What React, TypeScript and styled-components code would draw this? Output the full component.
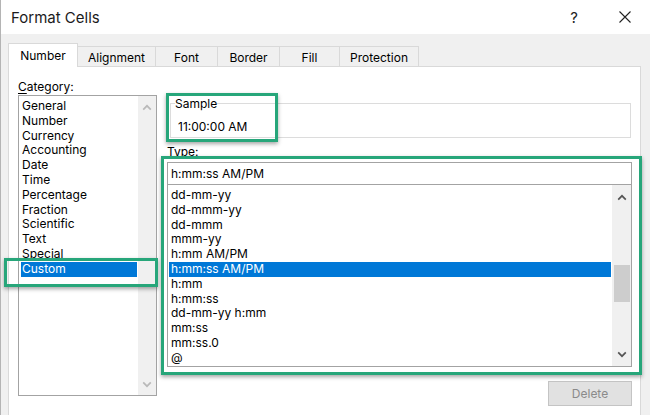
import React from 'react';
import styled, { createGlobalStyle } from 'styled-components';

const GlobalStyle = createGlobalStyle`
  html, body {
    margin: 0;
    padding: 0;
    background: #f0f0f0;
  }
  * {
    box-sizing: border-box;
  }
`;

const Window = styled.div`
  position: relative;
  width: 650px;
  height: 415px;
  overflow: hidden;
  display: flex;
  flex-direction: column;
  background: #f0f0f0;
  border-left: 1px solid #b4b4b4;
  font-family: Inter, "Open Sans", sans-serif;
  font-size: 12px;
  color: #000;
`;

const TitleBar = styled.div`
  flex: none;
  height: 34px;
  display: flex;
  align-items: center;
  background: #fff;
  padding: 0 2px 0 10px;
`;

const Title = styled.div`
  flex: 1;
  font-size: 15px;
  color: #1b1b1b;
`;

const TitleButton = styled.button`
  width: 46px;
  height: 30px;
  border: none;
  background: transparent;
  padding: 0;
  display: flex;
  align-items: center;
  justify-content: center;
  font-family: inherit;
  font-size: 15px;
  color: #222;

  & + & {
    margin-left: 5px;
  }
`;

const TabStrip = styled.div`
  flex: none;
  height: 32px;
  display: flex;
  align-items: flex-end;
  padding-left: 7px;
`;

const Tab = styled.div<{ $active?: boolean; $width: number }>`
  width: ${p => p.$width}px;
  height: ${p => (p.$active ? 24 : 20)}px;
  margin-right: -1px;
  margin-bottom: ${p => (p.$active ? -1 : 0)}px;
  display: flex;
  align-items: center;
  justify-content: center;
  border: 1px solid #d9d9d9;
  border-bottom: none;
  background: ${p => (p.$active ? '#fff' : '#f0f0f0')};
  position: relative;
  z-index: ${p => (p.$active ? 2 : 1)};
  padding-top: ${p => (p.$active ? 0 : 1)}px;
`;

const TabPanel = styled.div`
  flex: 1;
  width: 633px;
  margin-left: 7px;
  display: flex;
  align-items: flex-start;
  border: 1px solid #d9d9d9;
  border-bottom: none;
  background: #fff;
  padding: 12px 0 0 9px;
`;

const CategoryColumn = styled.div`
  width: 139px;
  display: flex;
  flex-direction: column;
`;

const FormatColumn = styled.div`
  width: 465px;
  margin-left: 10px;
  display: flex;
  flex-direction: column;
`;

const FieldLabel = styled.div<{ $gapTop?: number; $gapBottom?: number }>`
  line-height: 15px;
  margin-top: ${p => p.$gapTop ?? 0}px;
  margin-bottom: ${p => p.$gapBottom ?? 0}px;

  u {
    text-decoration-thickness: 1px;
    text-underline-offset: 2px;
  }
`;

const ListBox = styled.div<{ $height: number }>`
  height: ${p => p.$height}px;
  display: flex;
  border: 1px solid #a3a3a3;
  background: #fff;
`;

const ListItems = styled.div<{ $padLeft: number; $padTop: number }>`
  flex: 1;
  display: flex;
  flex-direction: column;
  padding: ${p => p.$padTop}px 1px 0 ${p => p.$padLeft}px;
  overflow: hidden;
`;

const ListItem = styled.div<{ $selected?: boolean; $indent: number }>`
  line-height: 14.8px;
  height: 14.8px;
  white-space: nowrap;
  padding-left: ${p => p.$indent}px;
  background: ${p => (p.$selected ? '#0078d7' : 'transparent')};
  color: ${p => (p.$selected ? '#fff' : '#000')};
`;

const ScrollBar = styled.div<{ $width: number }>`
  width: ${p => p.$width}px;
  display: flex;
  flex-direction: column;
  background: #f0f0f0;
`;

const ScrollArrow = styled.div<{ $height: number }>`
  height: ${p => p.$height}px;
  flex: none;
  display: flex;
  align-items: center;
  justify-content: center;
`;

const ScrollTrack = styled.div`
  flex: 1;
  display: flex;
  flex-direction: column;
  align-items: center;
`;

const ScrollThumb = styled.div<{ $offset: number; $size: number }>`
  width: 16px;
  margin-top: ${p => p.$offset}px;
  height: ${p => p.$size}px;
  background: #cdcdcd;
`;

const SampleGroup = styled.fieldset`
  margin: 17px 1px 0 3px;
  padding: 8px 0 3px 4px;
  border: 1px solid #dcdcdc;
  min-width: 0;

  legend {
    padding: 0;
    line-height: 15px;
    font-size: 12px;
  }
`;

const SampleValue = styled.div`
  line-height: 15px;
  padding-left: 3px;
`;

const TypeInput = styled.input`
  height: 22px;
  width: 100%;
  border: 1px solid #a3a3a3;
  border-bottom: none;
  padding: 0 0 0 3px;
  font-family: inherit;
  font-size: 12px;
  color: #000;
  background: #fff;
  outline: none;
`;

const ButtonRow = styled.div`
  display: flex;
  justify-content: flex-end;
  margin-top: 14px;
`;

const DeleteButton = styled.button`
  width: 84px;
  height: 25px;
  border: 1px solid #c4c4c4;
  background: #e1e1e1;
  color: #8a8a8a;
  font-family: inherit;
  font-size: 12px;
  padding: 0;
`;

const Callout = styled.div<{ $x: number; $y: number; $w: number; $h: number }>`
  position: absolute;
  left: ${p => p.$x}px;
  top: ${p => p.$y}px;
  width: ${p => p.$w}px;
  height: ${p => p.$h}px;
  border: 3px solid #27a67a;
  box-shadow: 0 2px 4px rgba(0, 0, 0, 0.35);
  pointer-events: none;
  z-index: 5;
`;

const Chevron = ({ dir, color }: { dir: 'up' | 'down'; color: string }) => (
  <svg width="10" height="7" viewBox="0 0 10 7">
    <path
      d={dir === 'up' ? 'M1.2 5.6 L5 1.8 L8.8 5.6' : 'M1.2 1.4 L5 5.2 L8.8 1.4'}
      fill="none"
      stroke={color}
      strokeWidth="1.7"
    />
  </svg>
);

const tabs = [
  { label: 'Number', width: 70 },
  { label: 'Alignment', width: 79 },
  { label: 'Font', width: 63 },
  { label: 'Border', width: 63 },
  { label: 'Fill', width: 61 },
  { label: 'Protection', width: 80 },
];

const categories = [
  'General', 'Number', 'Currency', 'Accounting', 'Date', 'Time',
  'Percentage', 'Fraction', 'Scientific', 'Text', 'Special', 'Custom',
];

const formats = [
  'dd-mm-yy', 'dd-mmm-yy', 'dd-mmm', 'mmm-yy', 'h:mm AM/PM', 'h:mm:ss AM/PM',
  'h:mm', 'h:mm:ss', 'dd-mm-yy h:mm', 'mm:ss', 'mm:ss.0', '@',
];

export default function App() {
  return (
    <>
      <GlobalStyle />
      <Window>
        <TitleBar>
          <Title>Format Cells</Title>
          <TitleButton>?</TitleButton>
          <TitleButton>
            <svg width="12" height="12" viewBox="0 0 12 12">
              <path d="M0.5 0.5 L11.5 11.5 M11.5 0.5 L0.5 11.5" stroke="#222" strokeWidth="1.1" />
            </svg>
          </TitleButton>
        </TitleBar>

        <TabStrip>
          {tabs.map(t => (
            <Tab key={t.label} $width={t.width} $active={t.label === 'Number'}>
              {t.label}
            </Tab>
          ))}
        </TabStrip>

        <TabPanel>
          <CategoryColumn>
            <FieldLabel $gapBottom={1}>
              <u>C</u>ategory:
            </FieldLabel>
            <ListBox $height={301}>
              <ListItems $padLeft={2} $padTop={3}>
                {categories.map(c => (
                  <ListItem key={c} $indent={1} $selected={c === 'Custom'}>
                    {c}
                  </ListItem>
                ))}
              </ListItems>
              <ScrollBar $width={18}>
                <ScrollArrow $height={22}>
                  <Chevron dir="up" color="#b9b9b9" />
                </ScrollArrow>
                <ScrollTrack />
                <ScrollArrow $height={22}>
                  <Chevron dir="down" color="#b9b9b9" />
                </ScrollArrow>
              </ScrollBar>
            </ListBox>
          </CategoryColumn>

          <FormatColumn>
            <SampleGroup>
              <legend>Sample</legend>
              <SampleValue>11:00:00 AM</SampleValue>
            </SampleGroup>
            <FieldLabel $gapTop={6} $gapBottom={3}>
              <u>T</u>ype:
            </FieldLabel>
            <TypeInput readOnly value="h:mm:ss AM/PM" />
            <ListBox $height={183}>
              <ListItems $padLeft={1} $padTop={3}>
                {formats.map(f => (
                  <ListItem key={f} $indent={2} $selected={f === 'h:mm:ss AM/PM'}>
                    {f}
                  </ListItem>
                ))}
              </ListItems>
              <ScrollBar $width={19}>
                <ScrollArrow $height={24}>
                  <Chevron dir="up" color="#555" />
                </ScrollArrow>
                <ScrollTrack>
                  <ScrollThumb $offset={56} $size={37} />
                </ScrollTrack>
                <ScrollArrow $height={24}>
                  <Chevron dir="down" color="#555" />
                </ScrollArrow>
              </ScrollBar>
            </ListBox>
            <ButtonRow>
              <DeleteButton disabled>Delete</DeleteButton>
            </ButtonRow>
          </FormatColumn>
        </TabPanel>

        <Callout $x={165} $y={93} $w={112} $h={49} />
        <Callout $x={160} $y={156} $w={481} $h={219} />
        <Callout $x={3} $y={258} $w={154} $h={29} />
      </Window>
    </>
  );
}
